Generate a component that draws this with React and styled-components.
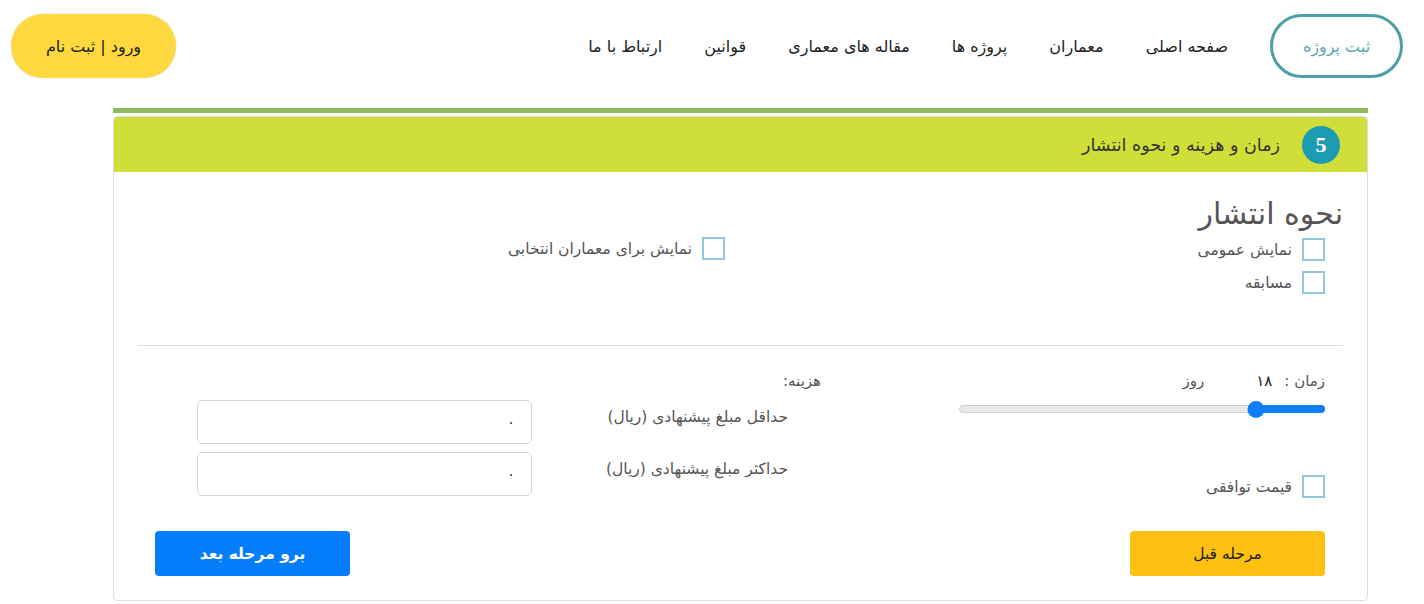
import React from 'react';
import styled, { createGlobalStyle } from 'styled-components';

const GlobalStyle = createGlobalStyle`
  body {
    margin: 0;
    background: #fff;
    font-family: "DejaVu Sans", "Noto Sans", sans-serif;
    color: #333;
  }
  * { box-sizing: border-box; }
`;

const Page = styled.div`
  direction: rtl;
  width: 1424px;
  height: 604px;
  overflow: hidden;
`;

// سربرگ بالای صفحه
const Header = styled.header`
  display: flex;
  align-items: center;
  height: 92px;
  padding: 0 21px 0 11px;
`;

const ProjectButton = styled.a`
  display: flex;
  align-items: center;
  justify-content: center;
  width: 133px;
  height: 64px;
  border: 3px solid #4c9fa7;
  border-radius: 32px;
  color: #5aa8b2;
  font-size: 16px;
  margin-left: 42px;
`;

const Nav = styled.nav`
  display: flex;
  align-items: center;
  gap: 42px;
`;

const NavLink = styled.a`
  font-size: 16px;
  color: #222;
`;

const LoginButton = styled.a`
  margin-right: auto;
  display: flex;
  align-items: center;
  justify-content: center;
  width: 165px;
  height: 64px;
  border-radius: 32px;
  background: #fdd93f;
  box-shadow: 0 0 2px rgba(0, 0, 0, 0.15);
  color: #222;
  font-size: 16px;
`;

const Wrapper = styled.div`
  margin: 16px 56px 0 113px;
  border-top: 5px solid #8dbb5a;
  padding-top: 3px;
`;

const Card = styled.section`
  border: 1px solid #ddd;
  border-radius: 4px;
  height: 485px;
`;

const CardHeader = styled.div`
  display: flex;
  align-items: center;
  gap: 22px;
  height: 55px;
  padding-right: 27px;
  background: #cfde38;
  border-radius: 4px 4px 0 0;
`;

const StepBadge = styled.span`
  width: 38px;
  height: 38px;
  border-radius: 50%;
  background: #1d9bb2;
  color: #fff;
  display: flex;
  align-items: center;
  justify-content: center;
  font-family: "Liberation Serif", serif;
  font-weight: bold;
  font-size: 22px;
`;

const CardTitle = styled.span`
  font-size: 17.5px;
  color: #333;
`;

const CardBody = styled.div`
  padding: 22px 24px 0;
`;

const PublishRow = styled.div`
  display: flex;
  align-items: flex-start;
  height: 152px;
  border-bottom: 1px solid #ddd;
`;

const PublishCol = styled.div`
  display: flex;
  flex-direction: column;
  width: 618px;
`;

const SideCol = styled.div`
  padding-top: 38px;
`;

const Heading = styled.h2`
  margin: 0;
  font-size: 30px;
  font-weight: normal;
  color: #555;
  line-height: 39px;
`;

const CheckRow = styled.label`
  display: flex;
  align-items: center;
  gap: 10px;
  height: 33px;
  padding-right: ${(p) => p.$inset || 0}px;
  font-size: 15.5px;
  color: #555;
`;

const Box = styled.span`
  width: 23px;
  height: 23px;
  border: 2px solid #8fc8da;
  background: #fff;
  flex-shrink: 0;
`;

const Lower = styled.div`
  display: flex;
  padding: 24px 18px 0 0;
`;

const TimeCol = styled.div`
  width: 366px;
  display: flex;
  flex-direction: column;
`;

const TimeLabel = styled.div`
  display: flex;
  font-size: 15px;
  color: #555;
  height: 22px;
  align-items: center;
`;

const TimeValue = styled.span`
  color: #222;
  margin-right: 12px;
`;

const Unit = styled.span`
  margin-right: 52px;
`;

const Track = styled.div`
  position: relative;
  margin-top: 13px;
  height: 8px;
  border-radius: 4px;
  background: #e9e9e9;
  border: 1px solid #cfcfcf;
`;

const Fill = styled.div`
  position: absolute;
  right: -1px;
  top: -1px;
  height: 8px;
  border-radius: 4px;
  background: #0d7ef4;
`;

const Thumb = styled.div`
  position: absolute;
  top: -5px;
  width: 17px;
  height: 17px;
  border-radius: 50%;
  background: #0d7ef4;
  transform: translateX(50%);
`;

const CostCol = styled.div`
  flex: 1;
  padding-right: 138px;
`;

const CostTitle = styled.div`
  font-size: 15px;
  color: #555;
  height: 22px;
  display: flex;
  align-items: center;
`;

const CostGrid = styled.div`
  display: grid;
  grid-template-columns: 289px 335px;
  row-gap: 8px;
  margin-top: 8px;
`;

const CostLabel = styled.div`
  padding: 8px 33px 0 0;
  font-size: 15.5px;
  color: #555;
`;

const Field = styled.div`
  height: 44px;
  border: 1px solid #d6d6d6;
  border-radius: 5px;
  padding-right: 16px;
  display: flex;
  align-items: center;
  font-size: 15px;
  color: #333;
`;

const AgreedRow = styled.div`
  margin-top: 57px;
`;

const Actions = styled.div`
  display: flex;
  justify-content: space-between;
  padding: 28px 18px 0 17px;
`;

const ActionButton = styled.button`
  width: 195px;
  height: 45px;
  border: none;
  border-radius: 4px;
  font-family: inherit;
  font-size: 15.5px;
  background: ${(p) => (p.$primary ? '#067dfb' : '#fdbf10')};
  color: ${(p) => (p.$primary ? '#fff' : '#222')};
  font-weight: ${(p) => (p.$primary ? 'bold' : 'normal')};
`;

const Check = ({ label, inset }) => (
  <CheckRow $inset={inset}>
    <Box />
    {label}
  </CheckRow>
);

const navItems = ['صفحه اصلی', 'معماران', 'پروژه ها', 'مقاله های معماری', 'قوانین', 'ارتباط با ما'];

const App = () => {
  // موقعیت دستگیره اسلایدر زمان
  const filled = 18.6;

  return (
    <Page>
      <GlobalStyle />
      <Header>
        <ProjectButton>ثبت پروژه</ProjectButton>
        <Nav>
          {navItems.map((item) => (
            <NavLink key={item}>{item}</NavLink>
          ))}
        </Nav>
        <LoginButton>ورود | ثبت نام</LoginButton>
      </Header>

      <Wrapper>
        <Card>
          <CardHeader>
            <StepBadge>5</StepBadge>
            <CardTitle>زمان و هزینه و نحوه انتشار</CardTitle>
          </CardHeader>
          <CardBody>
            <PublishRow>
              <PublishCol>
                <Heading>نحوه انتشار</Heading>
                <Check label="نمایش عمومی" inset={18} />
                <Check label="مسابقه" inset={18} />
              </PublishCol>
              <SideCol>
                <Check label="نمایش برای معماران انتخابی" />
              </SideCol>
            </PublishRow>

            <Lower>
              <TimeCol>
                <TimeLabel>
                  زمان :<TimeValue>۱۸</TimeValue>
                  <Unit>روز</Unit>
                </TimeLabel>
                <Track>
                  <Fill style={{ width: `${filled}%` }} />
                  <Thumb style={{ right: `${filled}%` }} />
                </Track>
                <AgreedRow>
                  <Check label="قیمت توافقی" />
                </AgreedRow>
              </TimeCol>
              <CostCol>
                <CostTitle>هزینه:</CostTitle>
                <CostGrid>
                  <CostLabel>حداقل مبلغ پیشنهادی (ریال)</CostLabel>
                  <Field>۰</Field>
                  <CostLabel>حداکثر مبلغ پیشنهادی (ریال)</CostLabel>
                  <Field>۰</Field>
                </CostGrid>
              </CostCol>
            </Lower>

            <Actions>
              <ActionButton>مرحله قبل</ActionButton>
              <ActionButton $primary>برو مرحله بعد</ActionButton>
            </Actions>
          </CardBody>
        </Card>
      </Wrapper>
    </Page>
  );
};

export default App;
